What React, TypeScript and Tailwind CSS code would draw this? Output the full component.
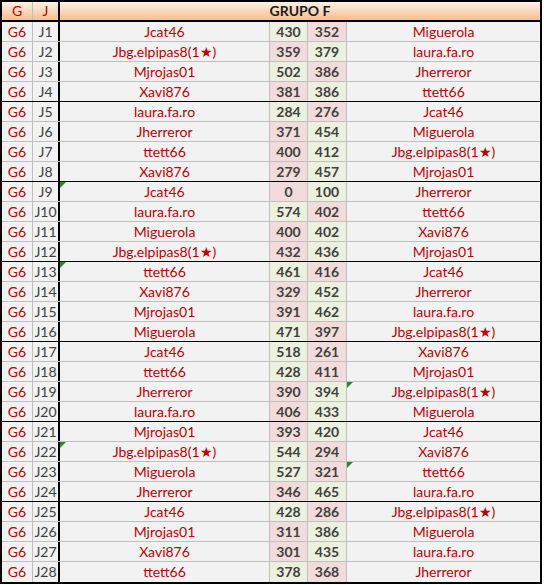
import React from "react";

type Match = {
  j: string;
  home: string;
  a: number;
  b: number;
  away: string;
  markHome?: boolean;
  markAway?: boolean;
};

const STAR = "Jbg.elpipas8(1★)";

const matches: Match[] = [
  { j: "J1", home: "Jcat46", a: 430, b: 352, away: "Miguerola" },
  { j: "J2", home: STAR, a: 359, b: 379, away: "laura.fa.ro" },
  { j: "J3", home: "Mjrojas01", a: 502, b: 386, away: "Jherreror" },
  { j: "J4", home: "Xavi876", a: 381, b: 386, away: "ttett66" },
  { j: "J5", home: "laura.fa.ro", a: 284, b: 276, away: "Jcat46" },
  { j: "J6", home: "Jherreror", a: 371, b: 454, away: "Miguerola" },
  { j: "J7", home: "ttett66", a: 400, b: 412, away: STAR },
  { j: "J8", home: "Xavi876", a: 279, b: 457, away: "Mjrojas01" },
  { j: "J9", home: "Jcat46", a: 0, b: 100, away: "Jherreror", markHome: true },
  { j: "J10", home: "laura.fa.ro", a: 574, b: 402, away: "ttett66" },
  { j: "J11", home: "Miguerola", a: 400, b: 402, away: "Xavi876" },
  { j: "J12", home: STAR, a: 432, b: 436, away: "Mjrojas01" },
  { j: "J13", home: "ttett66", a: 461, b: 416, away: "Jcat46", markHome: true },
  { j: "J14", home: "Xavi876", a: 329, b: 452, away: "Jherreror" },
  { j: "J15", home: "Mjrojas01", a: 391, b: 462, away: "laura.fa.ro" },
  { j: "J16", home: "Miguerola", a: 471, b: 397, away: STAR },
  { j: "J17", home: "Jcat46", a: 518, b: 261, away: "Xavi876" },
  { j: "J18", home: "ttett66", a: 428, b: 411, away: "Mjrojas01" },
  { j: "J19", home: "Jherreror", a: 390, b: 394, away: STAR, markAway: true },
  { j: "J20", home: "laura.fa.ro", a: 406, b: 433, away: "Miguerola" },
  { j: "J21", home: "Mjrojas01", a: 393, b: 420, away: "Jcat46" },
  { j: "J22", home: STAR, a: 544, b: 294, away: "Xavi876", markHome: true },
  { j: "J23", home: "Miguerola", a: 527, b: 321, away: "ttett66", markAway: true },
  { j: "J24", home: "Jherreror", a: 346, b: 465, away: "laura.fa.ro" },
  { j: "J25", home: "Jcat46", a: 428, b: 286, away: STAR },
  { j: "J26", home: "Mjrojas01", a: 311, b: 386, away: "Miguerola" },
  { j: "J27", home: "Xavi876", a: 301, b: 435, away: "laura.fa.ro" },
  { j: "J28", home: "ttett66", a: 378, b: 368, away: "Jherreror" },
];

// petit triangle vert façon Excel
const Mark = () => (
  <span className="absolute left-0 top-0 w-0 h-0 border-t-[6px] border-t-[#228b22] border-r-[6px] border-r-transparent" />
);

const cols = "grid grid-cols-[31px_27px_210px_38px_39px_1fr]";

const App: React.FC = () => {
  return (
    <div className="bg-white w-[544px] h-[585px] font-['Lato',sans-serif] text-[14px]">
      <div className="w-[542px] border-2 border-black">
        {/* en-tête */}
        <div className={`${cols} h-[20px] border-b-2 border-black bg-gradient-to-b from-[#fdf1e8] to-[#f8bd8c] leading-[18px]`}>
          <div className="border-r border-[#bfbfbf] text-center text-[#c00000]">G</div>
          <div className="border-r-2 border-black text-center text-[#c00000]">J</div>
          <div className="col-span-4 text-center font-bold text-[#1a1a1a]">GRUPO F</div>
        </div>

        {matches.map((m, i) => {
          const last = i === matches.length - 1;
          const groupEnd = (i + 1) % 4 === 0;
          const rowBorder = last ? "" : groupEnd ? "border-b border-black" : "border-b border-[#bfbfbf]";
          const aWin = m.a > m.b;
          return (
            <div key={m.j} className={`${cols} h-[20px] bg-[#f2f2f2] leading-[19px] ${rowBorder}`}>
              <div className="border-r border-[#bfbfbf] text-center text-[#c00000]">G6</div>
              <div className="border-r-2 border-black text-center text-[#404040]">{m.j}</div>
              <div className="relative border-r border-[#bfbfbf] text-center text-[#c00000]">
                {m.markHome && <Mark />}
                {m.home}
              </div>
              <div className={`border-r border-[#bfbfbf] text-center font-bold text-[#404040] ${aWin ? "bg-[#ebf1de]" : "bg-[#f2dcdb]"}`}>
                {m.a}
              </div>
              <div className={`border-r border-[#bfbfbf] text-center font-bold text-[#404040] ${aWin ? "bg-[#f2dcdb]" : "bg-[#ebf1de]"}`}>
                {m.b}
              </div>
              <div className="relative text-center text-[#c00000]">
                {m.markAway && <Mark />}
                {m.away}
              </div>
            </div>
          );
        })}
      </div>
    </div>
  );
};

export default App;
